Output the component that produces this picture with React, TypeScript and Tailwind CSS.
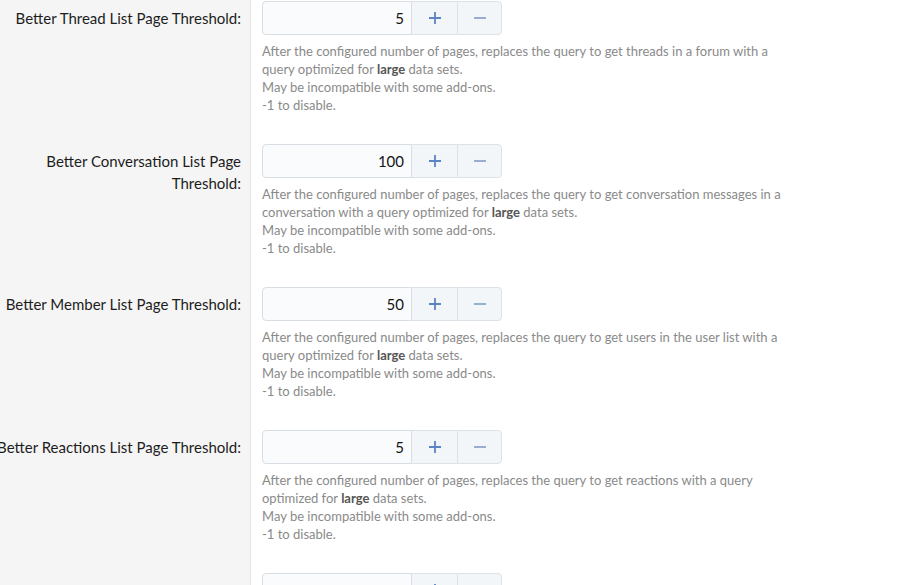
import React from 'react';

type Row = {
  label: string;
  value: string;
  desc?: string;
};

const rows: Row[] = [
  {
    label: 'Better Thread List Page Threshold:',
    value: '5',
    desc: 'After the configured number of pages, replaces the query to get threads in a forum with a',
  },
  {
    label: 'Better Conversation List Page Threshold:',
    value: '100',
    desc: 'After the configured number of pages, replaces the query to get conversation messages in a conversation with a',
  },
  {
    label: 'Better Member List Page Threshold:',
    value: '50',
    desc: 'After the configured number of pages, replaces the query to get users in the user list with a',
  },
  {
    label: 'Better Reactions List Page Threshold:',
    value: '5',
    desc: 'After the configured number of pages, replaces the query to get reactions with a',
  },
  { label: '', value: '' },
];

const NumberBox: React.FC<{ value: string }> = ({ value }) => (
  <div className="flex h-[34px] w-[240px]">
    <div className="flex w-[150px] items-center justify-end rounded-l-[4px] border border-[#d8dde3] bg-[#f9fbfd] pr-[7px] text-[15px] text-[#141414]">
      {value}
    </div>
    <button className="flex w-[45px] items-center justify-center border-y border-[#dde2e8] bg-[#f3f6f9]">
      <svg width="14" height="14" viewBox="0 0 14 14">
        <path d="M7 1v12M1 7h12" stroke="#5b84c4" strokeWidth="1.8" />
      </svg>
    </button>
    <button className="flex w-[45px] items-center justify-center rounded-r-[4px] border border-[#dde2e8] bg-[#f3f6f9]">
      <svg width="14" height="14" viewBox="0 0 14 14">
        <path d="M1 7h12" stroke="#8ea5cd" strokeWidth="1.8" />
      </svg>
    </button>
  </div>
);

export default function App() {
  return (
    <div
      className="min-h-screen w-[900px] overflow-hidden bg-white"
      style={{ fontFamily: 'Lato, "Liberation Sans", sans-serif' }}
    >
      {rows.map((row, i) => (
        <div key={i} className="flex">
          {/* label column */}
          <div className="flex w-[251px] shrink-0 justify-end border-r border-[#e4e4e4] bg-[#f5f5f5] pr-[9px] pt-[7px]">
            <label className="w-[262px] shrink-0 text-right text-[15px] leading-[22px] text-[#1d1d1d]">
              {row.label}
            </label>
          </div>
          {/* input column */}
          <div className="pl-[11px] pt-[1px] pb-[29px]">
            <NumberBox value={row.value} />
            {row.desc && (
              <div className="mt-[7px] w-[540px] text-[13px] leading-[18px] text-[#8a8a8a]">
                <p>
                  {row.desc} query optimized for <b className="font-bold text-[#555]">large</b> data sets.
                </p>
                <p>May be incompatible with some add-ons.</p>
                <p>-1 to disable.</p>
              </div>
            )}
          </div>
        </div>
      ))}
    </div>
  );
}
